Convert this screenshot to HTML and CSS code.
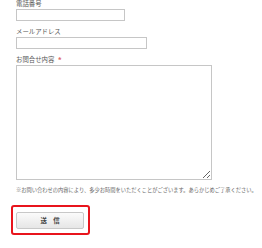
FILE: index.html
```html
<!DOCTYPE html>
<html lang="ja">
<head>
<meta charset="utf-8">
<link rel="stylesheet" href="styles.css">
</head>
<body>
<form class="form">
  <div class="field">
    <label class="label">電話番号</label>
    <input class="input input-tel" type="text">
  </div>
  <div class="field">
    <label class="label">メールアドレス</label>
    <input class="input input-mail" type="text">
  </div>
  <div class="field field-msg">
    <label class="label">お問合せ内容 <span class="req">*</span></label>
    <textarea class="textarea"></textarea>
  </div>
  <p class="note">※お問い合わせの内容により、多少お時間をいただくことがございます。あらかじめご了承ください。</p>
  <div class="submit-wrap">
    <button class="submit" type="button">送 信</button>
  </div>
</form>
</body>
</html>
```

FILE: styles.css
```css
* { box-sizing: border-box; }
html, body { margin: 0; padding: 0; background: #fff; }
body {
  font-family: "Noto Sans CJK JP", "Noto Sans", sans-serif;
  color: #555;
  width: 262px;
  height: 248px;
  overflow: hidden;
}
.form {
  margin-top: -2px;
  padding-left: 16px;
  display: flex;
  flex-direction: column;
  align-items: flex-start;
}
.field {
  display: flex;
  flex-direction: column;
  align-items: flex-start;
  margin-bottom: 5px;
}
.field-msg { margin-bottom: 6px; }
.label {
  font-size: 6.4px;
  line-height: 11px;
  height: 11px;
  color: #555;
}
.req {
  color: #e06a6a;
  font-size: 8px;
  font-weight: bold;
  margin-left: 2px;
  vertical-align: -1px;
}
.input {
  display: block;
  height: 12px;
  border: 1px solid #c6c6c6;
  background: #fff;
  padding: 0;
  margin: 0;
  outline: none;
}
.input-tel { width: 109px; }
.input-mail { width: 131px; }
.textarea {
  display: block;
  width: 196px;
  height: 115px;
  border: 1px solid #c6c6c6;
  padding: 0;
  margin: 0;
  resize: both;
  background: #fff;
}
.note {
  margin: 0;
  font-size: 5.25px;
  line-height: 8px;
  color: #666;
  white-space: nowrap;
}
.submit-wrap {
  margin-top: 11px;
  margin-left: -5px;
  border: 2px solid #e8141c;
  border-radius: 3px;
  padding: 5px 4px 4px 3px;
}
.submit {
  display: block;
  width: 68px;
  height: 17px;
  border: 1px solid #c8c8c8;
  border-radius: 2px;
  background: linear-gradient(#fbfbfb, #e6e6e6);
  font-family: "Noto Sans CJK JP", sans-serif;
  font-size: 6.4px;
  font-weight: bold;
  color: #444;
  padding: 0 0 0 2px;
  letter-spacing: 2px;
  word-spacing: 1px;
  line-height: 15px;
}
```
